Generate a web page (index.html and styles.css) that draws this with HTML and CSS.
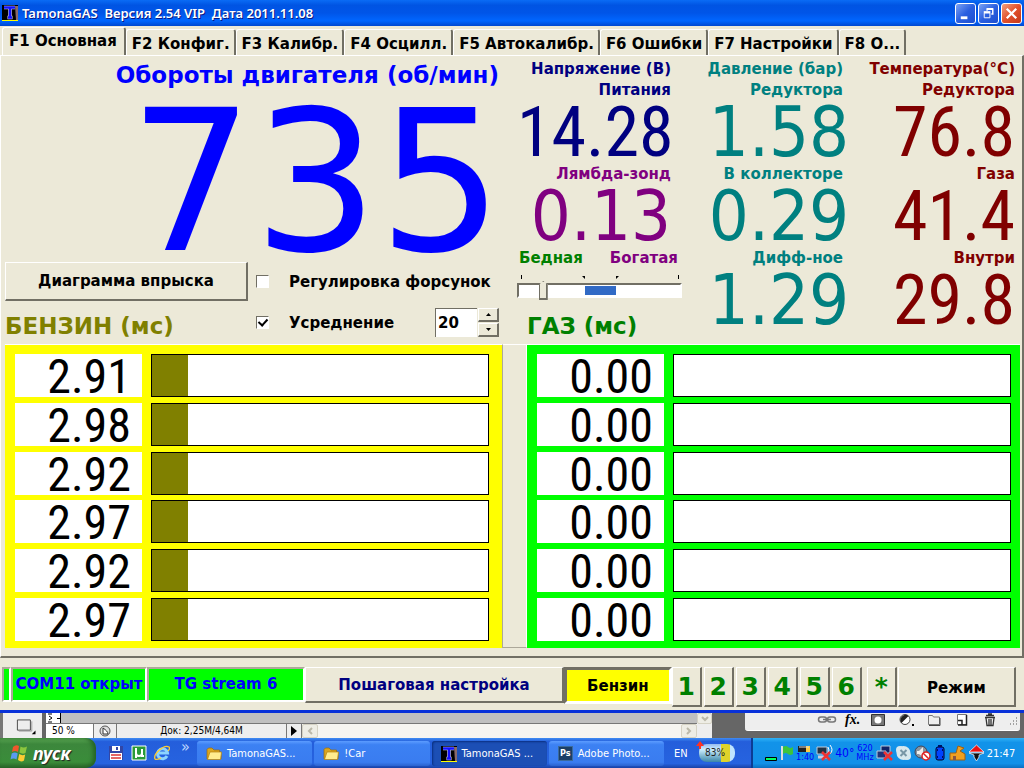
FILE: index.html
```html
<!DOCTYPE html>
<html lang="ru">
<head>
<meta charset="utf-8">
<title>TamonaGAS</title>
<link rel="stylesheet" href="styles.css">
</head>
<body>
<svg class="defs" aria-hidden="true">
  <symbol id="logo" viewBox="0 0 16 16"><rect width="16" height="15" fill="#000"/><path d="M13 1h3v14h-2z" fill="#8a6a6a"/><path d="M2 2.500h11M8 2v11M5.500 12.500h5" stroke="#dde" stroke-width="3.500"/><path d="M2 2.500h11M8 2v11M6 12.500h4" stroke="#11f" stroke-width="2.500"/><path d="M0 15.500h16" stroke="#ff0"/></symbol>
  <symbol id="folder" viewBox="0 0 16 14"><path d="M1 12V2.500L2.500 1H6l2 2h5.500v2H15v7z" fill="#d9a520" stroke="#9b6b08" stroke-width=".7"/><path d="M1.500 12.500 4 5h11.500l-1 7.500z" fill="#ffec8f" stroke="#b58310" stroke-width=".7"/></symbol>
</svg>
<header class="titlebar">
  <svg class="ico16"><use href="#logo"/></svg>
  <h1>TamonaGAS&nbsp; Версия 2.54 VIP&nbsp; Дата 2011.11.08</h1>
  <button class="win" aria-label="Свернуть"><svg viewBox="0 0 20 20"><path d="M5 14.500h7" stroke="#fff" stroke-width="3"/></svg></button>
  <button class="win" aria-label="Восстановить"><svg viewBox="0 0 20 20" fill="none" stroke="#fff"><path d="M5.500 9.500h6v5h-6z"/><path d="M5 8.500h7" stroke-width="2"/><path d="M8.500 7V5.500h6v5H13M8 5h7" stroke-width="1.500"/></svg></button>
  <button class="win close" aria-label="Закрыть"><svg viewBox="0 0 20 20"><path d="M5 5l10 10M15 5 5 15" stroke="#fff" stroke-width="2.400"/></svg></button>
</header>
<main class="app">
  <nav class="tabs">
    <button class="tab active">F1 Основная</button><button class="tab">F2 Конфиг.</button><button class="tab">F3 Калибр.</button><button class="tab">F4 Осцилл.</button><button class="tab">F5 Автокалибр.</button><button class="tab">F6 Ошибки</button><button class="tab">F7 Настройки</button><button class="tab">F8 О...</button>
  </nav>
  <div class="page">
    <section class="top">
      <div class="engine">
        <h2 class="rpm-title">Обороты двигателя (об/мин)</h2>
        <output class="rpm">735</output>
        <div class="controls">
          <button class="raised diagram">Диаграмма впрыска</button>
          <label class="check"><input type="checkbox"><span>Регулировка форсунок</span></label>
          <h2 class="fuel petrol-text">БЕНЗИН (мс)</h2>
          <div class="avg">
            <label class="check"><input type="checkbox" checked><span>Усреднение</span></label>
            <div class="spin"><input type="text" value="20" aria-label="Усреднение, значение"><div><button aria-label="Больше"><svg viewBox="0 0 5 3"><path d="M0 3h5L2.500 0z"/></svg></button><button aria-label="Меньше"><svg viewBox="0 0 5 3"><path d="M0 0h5L2.500 3z"/></svg></button></div></div>
          </div>
        </div>
      </div>
      <div class="col volt">
        <h3>Напряжение (В)</h3>
        <h4>Питания</h4><output class="narrow">14.28</output>
        <h4 class="purple">Лямбда-зонд</h4><output class="purple">0.13</output>
        <div class="mix"><span class="green">Бедная</span><span class="purple">Богатая</span></div>
        <svg class="ticks" viewBox="0 0 165 4" preserveAspectRatio="none"><path d="M4.500 0v4M161.500 0v4" stroke="#000"/><path d="M65 1h3v3zM99 1h3l-3 3z"/></svg>
        <input class="lambda" type="range" min="0" max="100" value="13" aria-label="Лямбда-зонд">
        <h2 class="fuel green">ГАЗ (мс)</h2>
      </div>
      <div class="col pressure">
        <h3>Давление (бар)</h3>
        <h4>Редуктора</h4><output>1.58</output>
        <h4>В коллекторе</h4><output>0.29</output>
        <h4>Дифф-ное</h4><output>1.29</output>
      </div>
      <div class="col temp">
        <h3>Температура(°C)</h3>
        <h4>Редуктора</h4><output class="narrow">76.8</output>
        <h4>Газа</h4><output class="narrow">41.4</output>
        <h4>Внутри</h4><output class="narrow">29.8</output>
      </div>
    </section>
    <section class="banks">
      <div class="bank petrol">
        <div class="inj"><output>2.91</output><div class="bar"><i style="width:10.8%"></i></div></div>
        <div class="inj"><output>2.98</output><div class="bar"><i style="width:10.8%"></i></div></div>
        <div class="inj"><output>2.92</output><div class="bar"><i style="width:10.8%"></i></div></div>
        <div class="inj"><output>2.97</output><div class="bar"><i style="width:10.8%"></i></div></div>
        <div class="inj"><output>2.92</output><div class="bar"><i style="width:10.8%"></i></div></div>
        <div class="inj"><output>2.97</output><div class="bar"><i style="width:10.8%"></i></div></div>
      </div>
      <div class="divider"></div>
      <div class="bank gas">
        <div class="inj"><output>0.00</output><div class="bar"></div></div>
        <div class="inj"><output>0.00</output><div class="bar"></div></div>
        <div class="inj"><output>0.00</output><div class="bar"></div></div>
        <div class="inj"><output>0.00</output><div class="bar"></div></div>
        <div class="inj"><output>0.00</output><div class="bar"></div></div>
        <div class="inj"><output>0.00</output><div class="bar"></div></div>
      </div>
    </section>
  </div>
  <footer class="status">
    <span class="led tiny"></span><span class="led com">COM11 открыт</span><span class="led stream">TG stream 6</span>
    <button class="raised setup">Пошаговая настройка</button>
    <button class="fuel-now">Бензин</button>
    <div class="nums"><button class="raised">1</button><button class="raised">2</button><button class="raised">3</button><button class="raised">4</button><button class="raised">5</button><button class="raised">6</button></div>
    <button class="raised star">*</button>
    <button class="raised mode">Режим</button>
  </footer>
</main>
<section class="editor">
  <div class="tool"><svg viewBox="0 0 42 25"><path d="M15.500 6.500h14v11h-14z" fill="#eee" stroke="#444"/><path d="M17 18.500h14V8" fill="none" stroke="#999"/><path d="M31 22h4v-4z"/></svg></div>
  <div class="doc">
    <div class="canvas"><svg viewBox="0 0 16 10"><path d="M0 0h15v10H0z" fill="#fff"/><path d="M14.500 0v10M11 5.500h4M2 1h4M3 3l3 2-3 2M2 9h4" fill="none" stroke="#000"/></svg></div>
    <div class="docbar">
      <span class="zoom">50 %</span>
      <svg class="clock" viewBox="0 0 22 14"><circle cx="11" cy="7" r="5" fill="#ddd" stroke="#555"/><path d="M9 4v6h5c0-2-2-4-5-6z" fill="#fff" stroke="#333"/></svg>
      <span class="docsize">Док: 2,25M/4,64M</span>
      <svg class="play" viewBox="0 0 14 14"><path d="M4 2v10l6-5z"/></svg>
      <div class="hscroll"><button aria-label="Влево"><svg viewBox="0 0 8 8"><path d="M6 1 3 4l3 3"/></svg></button><button aria-label="Вправо"><svg viewBox="0 0 8 8"><path d="M2 1l3 3-3 3"/></svg></button></div>
    </div>
  </div>
  <div class="vscroll"><button aria-label="Вниз"><svg viewBox="0 0 8 8"><path d="M1 2l3 3 3-3"/></svg></button></div>
  <div class="layers">
    <svg viewBox="0 0 20 14" fill="none" stroke="#777" stroke-width="1.500"><rect x="1.500" y="4" width="8" height="5" rx="2.500"/><rect x="10.500" y="4" width="8" height="5" rx="2.500"/><path d="M6 6.500h8"/></svg>
    <span class="fx">fx.</span>
    <svg viewBox="0 0 20 14"><path d="M3.500 1.500h13v11h-13z" fill="#777" stroke="#333"/><circle cx="10" cy="7" r="3.500" fill="#fff"/></svg>
    <svg viewBox="0 0 20 14"><circle cx="9" cy="6.500" r="5" fill="#fff" stroke="#444"/><path d="M5.500 10A5 5 0 0 1 12.500 3z" fill="#222"/><path d="M16 11h2v2h-2z"/></svg>
    <svg viewBox="0 0 20 14"><path d="M4.500 11.500v-9h4l1 1.500h6v7.500z" fill="#eee" stroke="#777"/><path d="M5 12.500h11V5" fill="none" stroke="#444"/></svg>
    <svg viewBox="0 0 20 14"><path d="M5.500 1.500h9v10h-9z" fill="#fff" stroke="#777"/><path d="M14.500 2v10H6M6 7.500h4V12" fill="none" stroke="#222" stroke-width="1.500"/></svg>
    <svg viewBox="0 0 20 14"><path d="M5 4.500h10M6 2.500h8M8 1h4M6 5l1 7.500h6L14 5M9 6v6M11 6v6" fill="none" stroke="#333" stroke-width="1.300"/></svg>
    <svg class="grip" viewBox="0 0 12 12"><path d="M2 10h1m2 0h1m2 0h1M5 7h1m2 0h1M8 4h1" stroke="#888" stroke-width="1.500"/></svg>
  </div>
</section>
<footer class="taskbar">
  <button class="start"><svg viewBox="0 0 20 20"><path d="M3 4q3-3 6-1L8 9q-3-2-6 0z" fill="#f0572c"/><path d="M10.500 3.500q3 2 6.500 0L15.500 10q-3 1.500-6-.5z" fill="#8cc63e"/><path d="M1.700 10.500q3-2 6 0L6.500 16.500q-3-2-6 0z" fill="#5a9bf0"/><path d="M9.200 11q3 2 6 .5L14 17.500q-3 2-6-.5z" fill="#fc3"/></svg><span>пуск</span></button>
  <div class="quick">
    <svg viewBox="0 0 16 16"><path d="M1 1h14v14H1z" fill="#3346a5"/><path d="M4 1h8v5H4z" fill="#fff"/><path d="M8 2h2v3H8z" fill="#3346a5"/><path d="M2 8h12v7H2z" fill="#fff"/><path d="M3 10h10M3 13h10" stroke="#d33" stroke-width="1.500"/></svg>
    <svg viewBox="0 0 16 16"><path d="M1 1h14v14H1z" fill="#2a9a38" stroke="#fff"/><path d="M5 3v10M5 8q0 3 3 3t3-3V4M11 8v3h2" fill="none" stroke="#fff" stroke-width="2"/></svg>
    <svg viewBox="0 0 16 16"><path d="M13 11a5 5 0 1 1 .5-3H4" fill="none" stroke="#8cd4ff" stroke-width="3"/><path d="M1 14C-1 9 10-1 15 2c1 1 0 3-1 4M1 14c1 1 4 0 6-1" fill="none" stroke="#fc3" stroke-width="1.300"/></svg>
    <span>»</span>
  </div>
  <nav class="tasks">
    <button><svg class="ico16"><use href="#folder"/></svg><span>TamonaGAS...</span></button>
    <button><svg class="ico16"><use href="#folder"/></svg><span>!Car</span></button>
    <button class="current"><svg class="ico16"><use href="#logo"/></svg><span>TamonaGAS ...</span></button>
    <button><b class="ps">Ps</b><span>Adobe Photo...</span></button>
  </nav>
  <span class="lang">EN</span>
  <div class="battery"><span>83%</span><svg viewBox="0 0 8 8"><path d="M3 0h2v3h3L4 8 0 3h3z" fill="#f32" transform="rotate(180 4 4)"/></svg></div>
  <div class="tray">
    <svg viewBox="0 0 14 18"><path d="M1.500 13.500h11v3h-11z" fill="#0f6" stroke="#000"/></svg>
    <svg viewBox="0 0 14 18"><path d="M2 2v14" stroke="#ddd" stroke-width="2"/><path d="M3 3q3-2 5 0t5 0v7q-3 2-5 0t-5 0z" fill="#3cc43c"/></svg>
    <div class="stack"><svg viewBox="0 0 16 8"><path d="M1 1h12v6H1z" fill="#222"/><path d="M9 1h4v6H9z" fill="#fc4"/><path d="M2 2h10" stroke="#ddd"/></svg><span>1:40</span></div>
    <svg class="wide" viewBox="0 0 17 18"><path d="M1 3h10v7H1z" fill="#234" stroke="#bcd"/><path d="M2 13h9" stroke="#ccd" stroke-width="3"/><path d="M12 3q2 3 0 6M14 1q4 5 0 9" fill="none" stroke="#fff"/><path d="M6 8l8 8M14 8l-8 8" stroke="#e33" stroke-width="2.500"/></svg>
    <span class="deg">40°</span>
    <div class="stack mhz"><span>620</span><span>MHz</span></div>
    <svg class="wide" viewBox="0 0 17 18"><path d="M5 2h9v7H5z" fill="#126" stroke="#bcd"/><path d="M1 7h9v7H1z" fill="#237" stroke="#bcd"/><path d="M8 8l8 8M16 8l-8 8" stroke="#e33" stroke-width="2.500"/></svg>
    <svg class="wide" viewBox="0 0 17 18"><circle cx="8.500" cy="9" r="7" fill="#d8e8ee"/><circle cx="5" cy="6" r="4" fill="#d8e8ee"/><circle cx="12" cy="12" r="4" fill="#d8e8ee"/><path d="M5.500 6l6 6M11.500 6l-6 6" stroke="#7896a6" stroke-width="2"/></svg>
    <svg class="wide" viewBox="0 0 17 18"><circle cx="7" cy="8" r="6" fill="#8895a0" stroke="#445"/><path d="M3 7h2l4-4v10L5 10H3z" fill="#eee"/><circle cx="12" cy="12" r="4" fill="#fff" stroke="#d22" stroke-width="1.500"/><path d="M9 9l6 6" stroke="#d22" stroke-width="1.500"/></svg>
    <svg viewBox="0 0 14 18"><rect x="3" y="3" width="8" height="13" rx="2" fill="#04f" stroke="#002"/><path d="M5 2h4M4 6h1M9 6h1M4 13h1M9 13h1" stroke="#001060" stroke-width="2"/></svg>
    <svg class="wide" viewBox="0 0 17 18"><path d="M1 9h6l2-7 6 2-4 3 5 3v6H1z" fill="#f0a020" stroke="#a06010"/><path d="M4 16v-4h3v4" fill="#854"/></svg>
    <svg class="wide" viewBox="0 0 17 18"><path d="M8.500 1 16 8H1z" fill="#e11" stroke="#fff" stroke-width=".7"/><path d="M1 9h15l-5 2v2l-2.500 4L6 13v-2z" fill="#111" stroke="#fff" stroke-width=".7"/></svg>
    <time>21:47</time>
  </div>
</footer>
</body>
</html>
```
FILE: styles.css
```css
* { box-sizing: border-box; }
body {
  margin: 0; min-height: 100vh; display: flex; flex-direction: column;
  font-family: "DejaVu Sans Condensed", "DejaVu Sans", sans-serif;
  background: #ece9d8; color: #000;
}
h1, h2, h3, h4 { margin: 0; }
button { font: inherit; color: inherit; margin: 0; padding: 0; border: 0; background: none; }
svg { display: block; flex: none; }
.defs { position: absolute; width: 0; height: 0; }
.ico16 { width: 16px; height: 16px; }

.titlebar {
  height: 26px; padding: 0 2px; display: flex; align-items: center; gap: 2px;
  background: linear-gradient(#0a6cf5, #0054e3 20%, #0055e8 50%, #0066ff 80%, #0048d0);
  color: #fff;
}
.titlebar h1 { flex: 1; padding-left: 2px; font-size: 13px; font-weight: 600; font-family: "Noto Sans", sans-serif; text-shadow: 1px 1px #0a1883; }
.win { width: 21px; height: 21px; border: 1px solid #fff; border-radius: 3px; background: linear-gradient(135deg, #7ba2f4, #2a5fe0 50%, #1c4fd0); }
.win.close { background: linear-gradient(135deg, #f0a080, #e2512b 50%, #c4391a); }

.app { flex: 1; display: flex; flex-direction: column; border-bottom: 3px solid #0831d9; font-weight: bold; font-size: 15px; font-family: "DejaVu Sans", sans-serif; }
.tabs { display: flex; align-items: flex-end; height: 29px; padding-left: 2px; }
.tab { height: 26px; padding: 2px 4px 0 5px; border: 1px solid #fff; border-right: 2px solid #716f64; border-bottom: 0; border-radius: 3px 3px 0 0; white-space: nowrap; }
.tab.active { height: 28px; padding: 0 7px 2px 6px; }

.page { flex: 1; display: flex; flex-direction: column; padding: 3px 2px 8px 4px; border: solid; border-width: 1px 2px 2px 1px; border-color: #fff #716f64 #716f64 #fff; }
.top { display: grid; grid-template-columns: minmax(0, 500fr) minmax(0, 177fr) minmax(0, 164fr) minmax(0, 174fr); height: 285px; }
.engine { display: flex; flex-direction: column; padding-right: 6px; }
.rpm-title { line-height: 32px; height: 32px; font-size: 23px; color: #00f; text-align: right; }
.rpm { height: 171px; line-height: 182px; margin-right: -4px; font-size: 196px; font-weight: normal; color: #00f; text-align: right; }
.controls { display: grid; grid-template-columns: 243px 1fr; column-gap: 8px; grid-template-rows: 39px 43px; align-items: center; }
.raised { border: solid; border-width: 1px 2px 2px 1px; border-color: #fff #716f64 #716f64 #fff; }
.diagram { height: 39px; }
.check { display: flex; align-items: center; gap: 20px; white-space: nowrap; }
.check input {
  appearance: none; width: 13px; height: 13px; margin: 0; background: #fff;
  border: 1px solid; border-color: #716f64 #fff #fff #716f64; display: grid; place-items: center;
}
.check input:checked::before { content: ""; width: 4px; height: 7px; margin-top: -2px; border: solid #000; border-width: 0 2px 2px 0; transform: rotate(42deg); }
.fuel { font-size: 23px; white-space: nowrap; }
.petrol-text { color: #808000; padding-top: 6px; }
.avg { display: flex; justify-content: space-between; }
.spin { display: flex; gap: 1px; width: 64px; height: 29px; }
.spin input { width: 42px; border: solid #fff; border-width: 1px 0 0 1px; border-color: #716f64; font: inherit; padding: 0 2px; background: #fff; }
.spin > div { flex: 1; display: grid; grid-template-rows: 1fr 1fr; gap: 1px; }
.spin button { display: grid; place-items: center; border: solid; border-width: 1px 2px 2px 1px; border-color: #fff #716f64 #716f64 #fff; }
.spin svg { width: 5px; height: 3px; }

.col { display: flex; flex-direction: column; text-align: right; white-space: nowrap; }
.col h3, .col h4 { font-size: 15px; line-height: 21px; height: 21px; }
.col output { height: 63px; line-height: 63px; font-size: 70px; font-weight: normal; font-family: "DejaVu Sans Condensed", sans-serif; }
.col output.narrow { font-family: "Roboto Condensed", "DejaVu Sans Condensed", sans-serif; }
.volt { color: #000080; padding-left: 12px; }
.volt h3, .volt h4, .volt output { margin-right: 11px; }
.pressure { color: #008080; }
.pressure h3, .pressure h4 { padding-right: 3px; }
.pressure output { margin-right: -3px; }
.temp { color: #800000; padding-right: 5px; }
.purple { color: #800080; }
.green { color: #008000; }
.mix { display: flex; justify-content: space-between; line-height: 21px; padding: 0 4px 0 2px; }
.ticks { width: 100%; height: 4px; margin: 6px 0 0; }
.lambda {
  appearance: none; width: 165px; height: 15px; margin: 4px 0 0;
  border: 2px solid; border-color: #716f64 #fff #fff #716f64;
  background: linear-gradient(90deg, #fff 41%, #316ac5 41% 60%, #fff 60%) center / 100% 9px no-repeat #fff;
}
.lambda::-webkit-slider-thumb { appearance: none; width: 9px; height: 19px; border: solid #716f64; border-width: 1px 2px 2px 1px; background: #ece9d8; clip-path: polygon(50% 0, 100% 20%, 100% 100%, 0 100%, 0 20%); }
.volt .fuel { text-align: left; padding-left: 10px; line-height: 42px; margin-top: 7px; }

.banks { display: grid; grid-template-columns: 497fr 25px 493fr; flex: 1; }
.bank { display: flex; flex-direction: column; justify-content: space-between; padding: 9px 13px 7px 10px; border-top: 1px solid #fff; }
.petrol { background: #ff0; }
.gas { background: #0f0; padding-right: 9px; }
.divider { border: 1px solid #aca899; border-top-color: #fff; border-right-color: #fff; }
.inj { display: grid; grid-template-columns: 127px 1fr; gap: 9px; height: 43px; }
.inj output { background: #fff; text-align: right; padding-right: 11px; font: 48px/45px "Roboto Condensed", "DejaVu Sans Condensed", sans-serif; height: 43px; }
.bar { background: #fff; border: 1px solid #000; }
.bar i { display: block; height: 100%; background: #808000; }

.status { display: flex; height: 52px; padding: 9px 8px 0 2px; align-items: flex-start; white-space: nowrap; }
.led { height: 35px; line-height: 31px; text-align: center; background: #0f0; color: #00f; border: 2px solid; border-color: #aca899 #fff #fff #aca899; }
.tiny { width: 9px; }
.com { width: 136px; }
.stream { width: 158px; }
.setup { flex: 262; height: 36px; color: #000080; }
.fuel-now { flex: 104; height: 37px; background: #ff0; border: 3px solid; border-color: #716f64 #fff #fff #716f64; }
.nums { display: flex; gap: 2px; margin-right: 5px; }
.nums button, .star { width: 30px; height: 40px; font-size: 25px; color: #008000; }
.star { margin-right: 1px; }
.mode { flex: 118; height: 40px; padding-top: 2px; }

.editor { height: 25px; display: flex; background: #666; font-size: 11px; }
.tool { width: 42px; margin-right: 4px; background: #eee; border-left: 3px solid #777; }
.tool svg { width: 39px; height: 25px; }
.doc { flex: 1; display: flex; flex-direction: column; }
.canvas { flex: 1; background: #c0c0c0; }
.canvas svg { width: 16px; height: 10px; }
.docbar { display: flex; height: 15px; background: #eee; border-top: 1px solid #777; line-height: 14px; font-size: 10px; }
.zoom { width: 48px; padding-left: 6px; background: #fff; border-right: 1px solid #777; }
.clock { width: 22px; height: 14px; }
.docsize { width: 171px; text-align: center; border: solid #777; border-width: 0 1px; }
.play { width: 14px; height: 14px; }
.hscroll { flex: 1; display: flex; justify-content: space-between; background: #f6f5f1; border-left: 1px solid #777; }
.hscroll button, .vscroll button { width: 16px; height: 14px; display: grid; place-items: center; background: #eeede5; border: 1px solid #d5d2c4; border-radius: 2px; }
.hscroll svg, .vscroll svg { width: 8px; height: 8px; fill: none; stroke: #bbb8a9; stroke-width: 2; }
.vscroll { width: 15px; background: #eee; margin-right: 33px; }
.vscroll button { height: 11px; width: 15px; }
.layers { width: 275px; height: 18px; margin-right: 4px; padding: 0 0 3px 72px; display: flex; align-items: center; justify-content: space-between; background: #eee; border-bottom: 1px solid #fff; border-radius: 0 0 3px 3px; }
.layers svg { width: 20px; height: 14px; }
.layers .grip { width: 12px; height: 12px; }
.fx { font: italic bold 14px "Liberation Serif", serif; }

.taskbar { height: 30px; display: flex; color: #fff; font-size: 11px; background: linear-gradient(#3f8cf3, #245edb 12%, #2663e0 85%, #1941a5); white-space: nowrap; }
.start { width: 96px; display: flex; align-items: center; gap: 3px; padding-left: 10px; border-radius: 0 10px 10px 0; background: linear-gradient(#5eac56, #3c873c 20%, #3a8d3a 80%, #2a652a); font: italic bold 18px "Noto Sans", sans-serif; text-shadow: 1px 1px 1px #222; box-shadow: inset -3px 0 4px #256325; }
.start svg { width: 20px; height: 20px; }
.quick { width: 101px; display: flex; align-items: center; gap: 7px; padding-left: 12px; }
.quick svg { width: 16px; height: 16px; }
.quick span { font-size: 16px; margin: -14px 0 0 4px; color: #bcd6ff; }
.tasks { flex: 1; display: grid; grid-template-columns: repeat(4, 1fr); gap: 2px; padding: 3px 0 2px; max-width: 480px; }
.tasks button { display: flex; align-items: center; gap: 5px; padding-left: 9px; border-radius: 3px; background: linear-gradient(#5c9cff, #3c81f3 15%, #3a7cf0 85%, #2b62ce); overflow: hidden; font-size: 11px; }
.tasks .current { background: #1c4fb5; box-shadow: inset 1px 1px 2px #0a2f80; padding-left: 9px; }
.ps { width: 15px; height: 15px; line-height: 13px; font-size: 9px; text-align: center; background: #1c3f66; border: 1px solid #3b6a9c; }
.lang { margin: auto 0; padding-left: 10px; width: 35px; font-size: 11px; }
.battery { position: relative; width: 36px; height: 18px; margin: 6px 16px 0 0; border-radius: 8px; background: linear-gradient(90deg, transparent 60%, #dfd32a 60% 85%, #bfe4ff 85%), linear-gradient(#9be, #cef 30%, #3a86a8); color: #222; text-align: center; font-size: 10px; line-height: 18px; }
.battery span { margin-right: 4px; }
.battery svg { position: absolute; left: -3px; top: -3px; width: 8px; height: 8px; }
.tray { width: 273px; display: flex; align-items: center; gap: 2px; padding: 0 12px 0 11px; border-left: 2px solid #0c3c94; background: linear-gradient(#2fb2f7, #1293e9 15%, #1290e8 85%, #0c6fc0); }
.tray svg { width: 14px; height: 18px; }
.tray svg.wide { width: 17px; }
.stack { display: flex; flex-direction: column; align-items: center; color: #00f; font-size: 9px; line-height: 9px; }
.tray .stack svg { width: 16px; height: 8px; }
.deg { color: #00f; font-size: 12px; }
.tray time { margin-left: auto; font-size: 11px; }
```
